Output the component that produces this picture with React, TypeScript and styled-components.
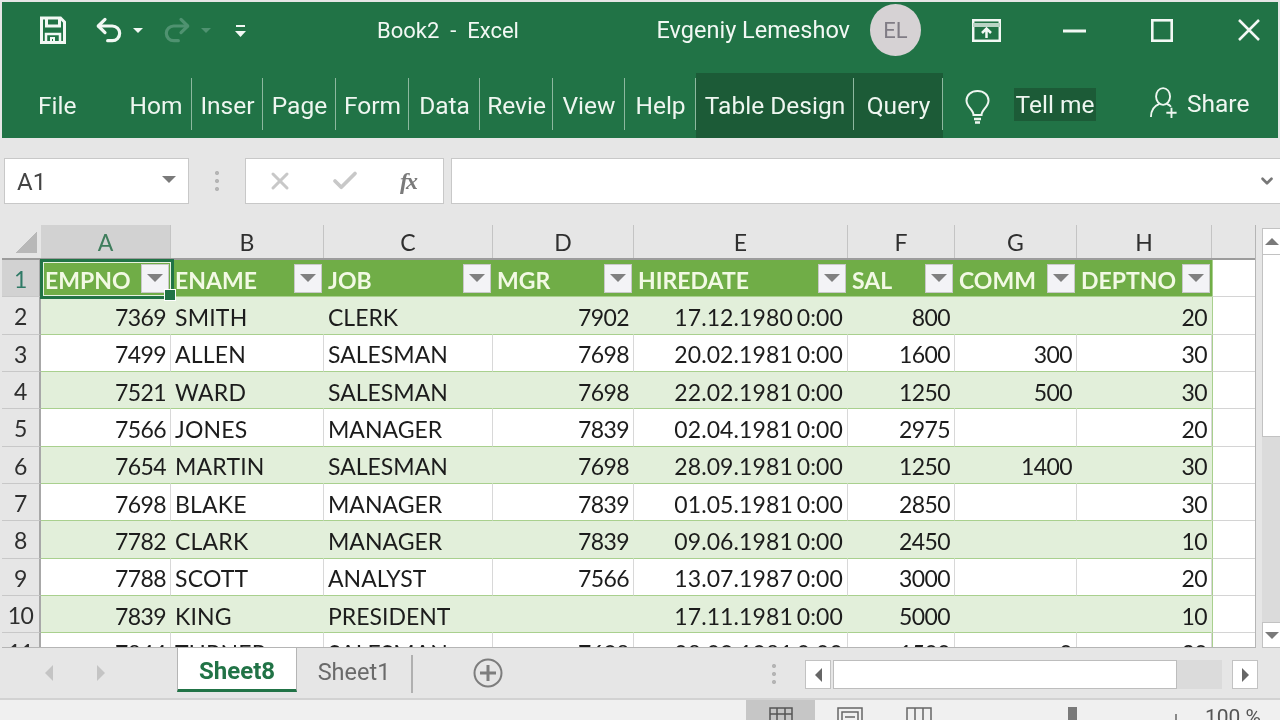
import styled, { createGlobalStyle } from "styled-components";
import { Undo2, Redo2, X, Check, ChevronDown } from "lucide-react";

const GlobalStyle = createGlobalStyle`
  html, body {
    margin: 0;
    padding: 0;
    background: #e6e6e6;
  }
  * {
    box-sizing: border-box;
  }
`;

const Window = styled.div`
  width: 1280px;
  height: 720px;
  overflow: hidden;
  display: flex;
  flex-direction: column;
  background: #e6e6e6;
  font-family: "Lato", "Liberation Sans", sans-serif;
  padding-top: 2px;
  filter: blur(0.4px);
`;

const TitleBar = styled.div`
  height: 71px;
  flex: none;
  display: flex;
  align-items: center;
  margin: 0 2px;
  padding: 0 18px 15px 38px;
  background: #217346;
  color: #f2f8f4;
`;

const Slot = styled.div<{ $left?: number; $top?: number; $right?: number; $grow?: boolean }>`
  display: flex;
  flex: ${(p) => (p.$grow ? "1" : "none")};
  margin-left: ${(p) => p.$left ?? 0}px;
  margin-top: ${(p) => p.$top ?? 0}px;
  margin-right: ${(p) => p.$right ?? 0}px;
`;

const TitleText = styled.div`
  flex: none;
  margin-left: 131px;
  font-family: "Roboto", sans-serif;
  font-size: 22px;
  white-space: pre;
`;

const TitleRight = styled.div`
  display: flex;
  align-items: center;
  margin-left: auto;
`;

const UserName = styled.div`
  font-family: "Roboto", sans-serif;
  font-size: 23.5px;
  white-space: nowrap;
`;

const Avatar = styled.div`
  width: 51px;
  height: 52px;
  margin-left: 20px;
  border-radius: 50%;
  background: #d6d2d4;
  color: #807c85;
  display: flex;
  align-items: center;
  justify-content: center;
  font-family: "Roboto", sans-serif;
  font-size: 22px;
`;

const Ribbon = styled.div`
  height: 65px;
  flex: none;
  display: flex;
  align-items: stretch;
  margin: 0 2px;
  background: #217346;
  color: #eef6f0;
  font-family: "Roboto", sans-serif;
  font-size: 24.5px;
`;

const FileTab = styled.div`
  width: 118px;
  flex: none;
  padding: 18px 0 0 36px;
`;

const RibbonTab = styled.div<{ $width: number; $dark?: boolean }>`
  position: relative;
  width: ${(p) => p.$width}px;
  flex: none;
  padding-top: 18px;
  text-align: center;
  white-space: nowrap;
  overflow: hidden;
  background: ${(p) => (p.$dark ? "#1c5b37" : "transparent")};
  &::after {
    content: "";
    position: absolute;
    right: 0;
    top: 5px;
    bottom: 8px;
    width: 1px;
    background: #8db89f;
  }
`;

const TellMe = styled.div`
  margin: 15px 0 17px 24px;
  width: 82px;
  height: 33px;
  line-height: 33px;
  text-align: center;
  white-space: nowrap;
  background: #1c5b37;
`;

const ShareText = styled.div`
  margin: 16px 0 0 9px;
`;

const FormulaBar = styled.div`
  height: 87px;
  flex: none;
  display: flex;
  padding: 20px 0 21px 4px;
`;

const InputBox = styled.div<{ $width?: number }>`
  display: flex;
  align-items: center;
  flex: ${(p) => (p.$width ? "none" : "1")};
  width: ${(p) => (p.$width ? `${p.$width}px` : "auto")};
  background: #fff;
  border: 1.5px solid #c8c8c8;
  border-right: ${(p) => (p.$width ? "1.5px solid #c8c8c8" : "none")};
`;

const NameText = styled.span`
  margin-left: 12px;
  padding-top: 2px;
  font-family: "Roboto", sans-serif;
  font-size: 24px;
  color: #444;
  flex: 1;
`;

const Caret = styled.div<{ $size: number; $color: string; $dir?: "up" | "down" | "left" | "right" }>`
  flex: none;
  width: 0;
  height: 0;
  border: ${(p) => p.$size}px solid transparent;
  ${(p) => {
    const d = p.$dir ?? "down";
    if (d === "down") return `border-top: ${p.$size}px solid ${p.$color}; border-bottom: 0;`;
    if (d === "up") return `border-bottom: ${p.$size}px solid ${p.$color}; border-top: 0;`;
    if (d === "left") return `border-right: ${p.$size}px solid ${p.$color}; border-left: 0;`;
    return `border-left: ${p.$size}px solid ${p.$color}; border-right: 0;`;
  }}
`;

const Dots = styled.div<{ $left: number; $right: number; $top?: number }>`
  flex: none;
  align-self: ${(p) => (p.$top ? "flex-start" : "center")};
  width: 4px;
  height: 20px;
  margin: ${(p) => p.$top ?? 0}px ${(p) => p.$right}px 0 ${(p) => p.$left}px;
  background: radial-gradient(circle at 2px 2px, #b5b5b5 2px, transparent 2.2px) 0 0 / 4px 8px repeat-y;
`;

const FxText = styled.span`
  margin-left: 40px;
  font-family: "Liberation Serif", serif;
  font-style: italic;
  font-weight: 700;
  font-size: 24px;
  letter-spacing: -2px;
  color: #7a7a7a;
`;

const SheetArea = styled.div`
  height: 423px;
  flex: none;
  display: flex;
`;

const GridPanel = styled.div`
  width: 1254px;
  flex: none;
  margin-left: 2px;
  position: relative;
  overflow: hidden;
  border-bottom: 1.5px solid #b5b5b5;
  border-right: 1.5px solid #b5b5b5;
`;

const gridColumns = "39px 130px 153px 169px 141px 214px 107px 122px 135px 1fr";

const HeaderRow = styled.div`
  display: grid;
  grid-template-columns: ${gridColumns};
  height: 35px;
  border-bottom: 2px solid #9c9c9c;
`;

const Corner = styled.div`
  background: linear-gradient(135deg, transparent 50%, #b8b8b8 50%) no-repeat 13px 6px / 22px 22px;
`;

const ColHead = styled.div<{ $active?: boolean }>`
  display: flex;
  align-items: center;
  justify-content: center;
  font-size: 23px;
  color: ${(p) => (p.$active ? "#3f7d5c" : "#2f2f2f")};
  background: ${(p) => (p.$active ? "#d2d2d2" : "transparent")};
  border-right: 1.5px solid #c4c4c4;
`;

const Row = styled.div`
  display: grid;
  grid-template-columns: ${gridColumns};
  height: 37.33px;
  background: #fff;
`;

const RowHead = styled.div<{ $active?: boolean }>`
  display: flex;
  align-items: center;
  justify-content: center;
  padding-top: 2px;
  background: ${(p) => (p.$active ? "#d2d2d2" : "#e6e6e6")};
  color: ${(p) => (p.$active ? "#2f7a66" : "#2f2f2f")};
  border-right: 2px solid #a8a8a8;
  border-bottom: 1px solid #c8c8c8;
  font-size: 23px;
  letter-spacing: -0.5px;
`;

const Cell = styled.div<{ $right?: boolean; $band?: boolean; $spacing: number }>`
  display: flex;
  align-items: center;
  justify-content: ${(p) => (p.$right ? "flex-end" : "flex-start")};
  padding: 3px 4px 0 4px;
  font-size: 23px;
  letter-spacing: ${(p) => p.$spacing}px;
  word-spacing: -2px;
  color: #1c1c1c;
  white-space: nowrap;
  overflow: hidden;
  background: ${(p) => (p.$band ? "#e2efda" : "#fff")};
  border-bottom: 1.5px solid #a9d08e;
  border-right: 1.5px solid ${(p) => (p.$band ? "#e2efda" : "#d8d8d8")};
`;

const Filler = styled.div`
  background: #fff;
  border-left: 1.5px solid #a9d08e;
  border-bottom: 1.5px solid #d4d4d4;
`;

const HeadCell = styled.div`
  display: flex;
  align-items: center;
  justify-content: space-between;
  padding: 0 2px 0 4px;
  background: #70ad47;
  color: #f2f9e4;
  font-size: 23px;
  font-weight: 700;
  white-space: nowrap;
  overflow: hidden;
  border-bottom: 1.5px solid #a9d08e;
`;

const HeadLabel = styled.span`
  padding-top: 3px;
`;

const FilterButton = styled.div`
  flex: none;
  width: 28px;
  height: 29px;
  display: flex;
  align-items: center;
  justify-content: center;
  background: #f3f3f6;
  border: 1.5px solid #c9c9c9;
`;

const Selection = styled.div`
  position: absolute;
  left: 38px;
  top: 34px;
  width: 134px;
  height: 40px;
  border: 3px solid #217346;
  pointer-events: none;
  box-shadow: inset 0 0 0 1px #e8f2e0;
  &::after {
    content: "";
    position: absolute;
    right: -5px;
    bottom: -5px;
    width: 10px;
    height: 10px;
    background: #217346;
    border: 1px solid #fff;
  }
`;

const VScroll = styled.div`
  width: 20px;
  flex: none;
  margin-left: 6px;
  margin-top: 3px;
  display: flex;
  flex-direction: column;
`;

const ScrollButton = styled.div<{ $w?: number; $h?: number }>`
  flex: none;
  width: ${(p) => (p.$w ? `${p.$w}px` : "100%")};
  height: ${(p) => (p.$h ? `${p.$h}px` : "100%")};
  display: flex;
  align-items: center;
  justify-content: center;
  background: #fff;
  border: 1.5px solid #c2c2c2;
`;

const VThumb = styled.div`
  height: 182px;
  flex: none;
  background: #fff;
  border: 1.5px solid #c2c2c2;
  border-top: 0;
`;

const VTrack = styled.div`
  flex: 1;
  background: #dbdbdb;
`;

const TabBar = styled.div`
  height: 52px;
  flex: none;
  display: flex;
  align-items: flex-start;
  border-bottom: 2px solid #d2d2d2;
`;

const NavArrows = styled.div`
  width: 177px;
  flex: none;
  height: 50px;
  display: flex;
  align-items: center;
  padding: 0 0 0 45px;
  gap: 44px;
`;

const ActiveTab = styled.div`
  width: 120px;
  height: 45px;
  flex: none;
  display: flex;
  align-items: center;
  justify-content: center;
  margin-top: -1px;
  padding-top: 4px;
  background: #fff;
  color: #217346;
  font-family: "Roboto", sans-serif;
  font-weight: 700;
  font-size: 24px;
  border: 1.5px solid #b5b5b5;
  border-top-color: #fff;
  border-bottom: 3px solid #217346;
`;

const SheetTab = styled.div`
  width: 116px;
  height: 38px;
  margin-top: 7px;
  padding-bottom: 4px;
  flex: none;
  display: flex;
  align-items: center;
  justify-content: center;
  color: #6a6a6a;
  font-family: "Roboto", sans-serif;
  font-size: 23.5px;
  border-right: 2px solid #b0b0b0;
`;

const AddSheet = styled.div`
  flex: none;
  margin: 10px 0 0 60px;
  width: 30px;
  height: 30px;
  display: flex;
`;

const HScroll = styled.div`
  width: 453px;
  height: 29px;
  flex: none;
  margin-top: 12px;
  display: flex;
`;

const HThumb = styled.div`
  width: 344px;
  flex: none;
  margin-left: 2px;
  background: #fff;
  border: 1.5px solid #bdbdbd;
`;

const HTrack = styled.div`
  flex: 1;
  background: #dbdbdb;
  margin-right: 10px;
`;

const StatusBar = styled.div`
  flex: 1;
  display: flex;
  align-items: stretch;
  background: #f0f0f0;
  overflow: hidden;
  padding-left: 746px;
`;

const ViewButton = styled.div<{ $active?: boolean; $width: number }>`
  width: ${(p) => p.$width}px;
  flex: none;
  display: flex;
  justify-content: center;
  padding-top: 7px;
  background: ${(p) => (p.$active ? "#c6c6c6" : "transparent")};
`;

const SliderThumb = styled.div`
  flex: none;
  width: 9px;
  margin: 7px 0 0 115px;
  background: #7a7a7a;
`;

const SliderTick = styled.div`
  flex: none;
  width: 2px;
  margin: 14px 0 0 98px;
  background: #888;
`;

const ZoomText = styled.div`
  margin: 5px 0 0 28px;
  font-family: "Roboto", sans-serif;
  font-size: 21px;
  color: #555;
  white-space: nowrap;
`;

const SaveIcon = () => (
  <svg width="26" height="28" viewBox="0 0 26 28" fill="none" stroke="#f2f8f4" strokeWidth="3">
    <path d="M1.5 2h19l4 4v20.5h-23z" />
    <path d="M6.5 2v8h13V2" />
    <path d="M6 26v-8h14v8" strokeWidth="2.5" />
    <path d="M11 26v-4h3v4" strokeWidth="2" />
  </svg>
);

const RibbonDisplayIcon = () => (
  <svg width="29" height="23" viewBox="0 0 29 23" fill="none" stroke="#f2f8f4" strokeWidth="2.5">
    <rect x="1.2" y="1.2" width="26.6" height="20.6" />
    <path d="M1 6h27" strokeWidth="4" stroke="#b9d4c4" />
    <path d="M14.5 19v-9M10 14l4.5-4.5L19 14" />
  </svg>
);

const MinimizeIcon = () => (
  <svg width="23" height="23" viewBox="0 0 23 23" stroke="#f2f8f4" strokeWidth="3">
    <path d="M0 12h23" />
  </svg>
);

const MaximizeIcon = () => (
  <svg width="22" height="23" viewBox="0 0 22 23" fill="none" stroke="#f2f8f4" strokeWidth="2.6">
    <rect x="1.3" y="1.3" width="19.4" height="20.4" />
  </svg>
);

const CloseIcon = () => (
  <svg width="22" height="22" viewBox="0 0 22 22" stroke="#f2f8f4" strokeWidth="2.5">
    <path d="M1 1l20 20M21 1L1 21" />
  </svg>
);

const CustomizeIcon = () => (
  <svg width="11" height="16" viewBox="0 0 11 16" fill="#f2f8f4">
    <rect x="1" y="0" width="9" height="2" />
    <path d="M0 6h11L5.5 12z" />
  </svg>
);

const BulbIcon = () => (
  <svg width="25" height="34" viewBox="0 0 25 34" fill="none" stroke="#eef6f0" strokeWidth="2">
    <path d="M8.5 25c0-5-7-8-7-14.5C1.500 5 6 1 12.500 1S23.500 5 23.500 10.500C23.500 17 16.500 20 16.500 25z" />
    <path d="M9 29h7M10 32.500h5" strokeWidth="2.400" />
  </svg>
);

const ShareIcon = () => (
  <svg width="28" height="32" viewBox="0 0 30 34" fill="none" stroke="#eef6f0" strokeWidth="2">
    <ellipse cx="14" cy="10" rx="7.500" ry="9" />
    <path d="M1 32c0-8 4-12 9-14M18 18c2 .8 3.500 1.800 4.500 3" />
    <path d="M23 22v11M17.500 27.500h11" />
  </svg>
);

const PlusCircleIcon = () => (
  <svg width="30" height="30" viewBox="0 0 30 30" fill="none" stroke="#7d7d7d">
    <circle cx="15" cy="15" r="13.500" strokeWidth="2" />
    <path d="M15 7v16M7 15h16" strokeWidth="3" />
  </svg>
);

const NormalViewIcon = () => (
  <svg width="24" height="20" viewBox="0 0 24 20" fill="none" stroke="#555" strokeWidth="1.5">
    <rect x="1" y="1" width="22" height="18" />
    <path d="M1 7h22M8 1v18M16 1v18" />
  </svg>
);

const PageLayoutIcon = () => (
  <svg width="26" height="20" viewBox="0 0 26 20" fill="none" stroke="#666" strokeWidth="1.5">
    <rect x="1" y="1" width="24" height="18" />
    <rect x="5" y="5" width="16" height="14" />
    <path d="M8 10h10" />
  </svg>
);

const PageBreakIcon = () => (
  <svg width="26" height="20" viewBox="0 0 26 20" fill="none" stroke="#666" strokeWidth="1.5">
    <rect x="1" y="1" width="24" height="18" />
    <path d="M9 1v18M17 1v18" />
  </svg>
);

const ribbonTabs = [
  { label: "Hom", width: 72 },
  { label: "Inser", width: 71 },
  { label: "Page", width: 73 },
  { label: "Form", width: 73 },
  { label: "Data", width: 71 },
  { label: "Revie", width: 73 },
  { label: "View", width: 72 },
  { label: "Help", width: 71 },
  { label: "Table Design", width: 158, dark: true },
  { label: "Query", width: 89, dark: true },
];

const columns = ["A", "B", "C", "D", "E", "F", "G", "H"];
const fields = ["EMPNO", "ENAME", "JOB", "MGR", "HIREDATE", "SAL", "COMM", "DEPTNO"];
const rightAligned = [true, false, false, true, true, true, true, true];
const columnSpacing = [-0.6, 0.2, 0, -0.6, 0.1, -0.6, -0.6, -0.6];

const rows = [
  ["7369", "SMITH", "CLERK", "7902", "17.12.1980 0:00", "800", "", "20"],
  ["7499", "ALLEN", "SALESMAN", "7698", "20.02.1981 0:00", "1600", "300", "30"],
  ["7521", "WARD", "SALESMAN", "7698", "22.02.1981 0:00", "1250", "500", "30"],
  ["7566", "JONES", "MANAGER", "7839", "02.04.1981 0:00", "2975", "", "20"],
  ["7654", "MARTIN", "SALESMAN", "7698", "28.09.1981 0:00", "1250", "1400", "30"],
  ["7698", "BLAKE", "MANAGER", "7839", "01.05.1981 0:00", "2850", "", "30"],
  ["7782", "CLARK", "MANAGER", "7839", "09.06.1981 0:00", "2450", "", "10"],
  ["7788", "SCOTT", "ANALYST", "7566", "13.07.1987 0:00", "3000", "", "20"],
  ["7839", "KING", "PRESIDENT", "", "17.11.1981 0:00", "5000", "", "10"],
  ["7844", "TURNER", "SALESMAN", "7698", "08.09.1981 0:00", "1500", "0", "30"],
];

export default function App() {
  return (
    <Window>
      <GlobalStyle />
      <TitleBar>
        <Slot><SaveIcon /></Slot>
        <Slot $left={27}><Undo2 size={32} color="#f2f8f4" strokeWidth={2.4} /></Slot>
        <Slot $left={8}><Caret $size={5} $color="#f2f8f4" /></Slot>
        <Slot $left={18}><Redo2 size={32} color="#4f9270" strokeWidth={2.4} /></Slot>
        <Slot $left={8}><Caret $size={5} $color="#4f9270" /></Slot>
        <Slot $left={24} $top={6}><CustomizeIcon /></Slot>
        <TitleText>Book2  -  Excel</TitleText>
        <TitleRight>
          <UserName>Evgeniy Lemeshov</UserName>
          <Avatar>EL</Avatar>
          <Slot $left={51}><RibbonDisplayIcon /></Slot>
          <Slot $left={62}><MinimizeIcon /></Slot>
          <Slot $left={65}><MaximizeIcon /></Slot>
          <Slot $left={65}><CloseIcon /></Slot>
        </TitleRight>
      </TitleBar>

      <Ribbon>
        <FileTab>File</FileTab>
        {ribbonTabs.map((tab) => (
          <RibbonTab key={tab.label} $width={tab.width} $dark={tab.dark}>
            {tab.label}
          </RibbonTab>
        ))}
        <Slot $left={22} $top={17}><BulbIcon /></Slot>
        <TellMe>Tell me</TellMe>
        <Slot $left={54} $top={14}><ShareIcon /></Slot>
        <ShareText>Share</ShareText>
      </Ribbon>

      <FormulaBar>
        <InputBox $width={185}>
          <NameText>A1</NameText>
          <Slot $top={-4} $right={12}>
            <Caret $size={7} $color="#7a7a7a" />
          </Slot>
        </InputBox>
        <Dots $left={26} $right={26} />
        <InputBox $width={199}>
          <Slot $left={20}><X size={28} color="#c8c8c8" strokeWidth={2.6} /></Slot>
          <Slot $left={36}><Check size={30} color="#c8c8c8" strokeWidth={3} /></Slot>
          <FxText>fx</FxText>
        </InputBox>
        <Slot $left={7} $grow>
          <InputBox>
            <Slot $left={806}><ChevronDown size={18} color="#777" strokeWidth={3.5} /></Slot>
          </InputBox>
        </Slot>
      </FormulaBar>

      <SheetArea>
        <GridPanel>
          <HeaderRow>
            <Corner />
            {columns.map((c, i) => (
              <ColHead key={c} $active={i === 0}>{c}</ColHead>
            ))}
            <div />
          </HeaderRow>
          <Row>
            <RowHead $active>1</RowHead>
            {fields.map((f) => (
              <HeadCell key={f}>
                <HeadLabel>{f}</HeadLabel>
                <FilterButton><Caret $size={8} $color="#808080" /></FilterButton>
              </HeadCell>
            ))}
            <Filler />
          </Row>
          {rows.map((row, r) => (
            <Row key={row[0]}>
              <RowHead>{r + 2}</RowHead>
              {row.map((value, c) => (
                <Cell key={c} $right={rightAligned[c]} $band={r % 2 === 0} $spacing={columnSpacing[c]}>
                  {value}
                </Cell>
              ))}
              <Filler />
            </Row>
          ))}
          <Selection />
        </GridPanel>
        <VScroll>
          <ScrollButton $h={27}><Caret $size={7} $color="#7a7a7a" $dir="up" /></ScrollButton>
          <VThumb />
          <VTrack />
          <ScrollButton $h={26}><Caret $size={7} $color="#7a7a7a" /></ScrollButton>
        </VScroll>
      </SheetArea>

      <TabBar>
        <NavArrows>
          <Caret $size={8} $color="#c4c4c4" $dir="left" />
          <Caret $size={8} $color="#c4c4c4" $dir="right" />
        </NavArrows>
        <ActiveTab>Sheet8</ActiveTab>
        <SheetTab>Sheet1</SheetTab>
        <AddSheet><PlusCircleIcon /></AddSheet>
        <Dots $left={269} $right={29} $top={16} />
        <HScroll>
          <ScrollButton $w={26}><Caret $size={7} $color="#666" $dir="left" /></ScrollButton>
          <HThumb />
          <HTrack />
          <ScrollButton $w={26}><Caret $size={7} $color="#666" $dir="right" /></ScrollButton>
        </HScroll>
      </TabBar>

      <StatusBar>
        <ViewButton $active $width={69}><NormalViewIcon /></ViewButton>
        <ViewButton $width={69}><PageLayoutIcon /></ViewButton>
        <ViewButton $width={69}><PageBreakIcon /></ViewButton>
        <SliderThumb />
        <SliderTick />
        <ZoomText>100 %</ZoomText>
      </StatusBar>
    </Window>
  );
}
